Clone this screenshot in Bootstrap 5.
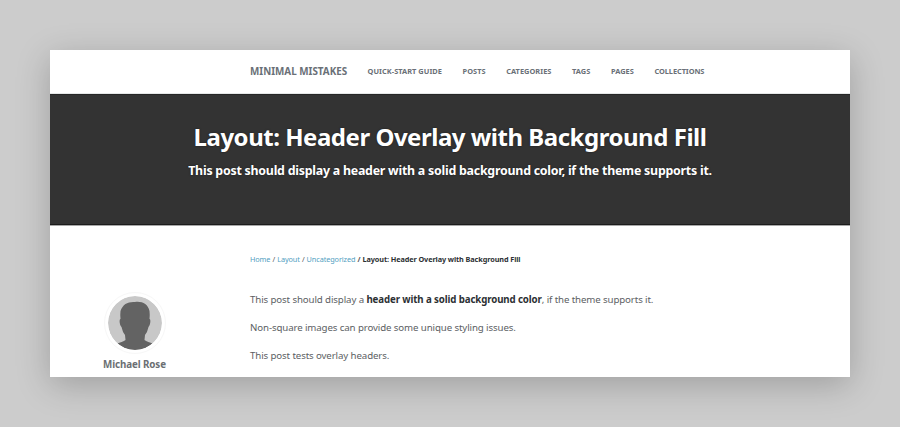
<!DOCTYPE html>
<html lang="en">
<head>
<meta charset="utf-8">
<meta name="viewport" content="width=device-width, initial-scale=1">
<title>Layout: Header Overlay with Background Fill</title>
<link href="https://cdn.jsdelivr.net/npm/bootstrap@5.3.0/dist/css/bootstrap.min.css" rel="stylesheet">
<script src="https://cdn.jsdelivr.net/npm/bootstrap@5.3.0/dist/js/bootstrap.bundle.min.js"></script>
<style>
body{font-family:"Noto Sans",sans-serif;background:#ccc;color:#5c6063;height:427px;padding:50px}
.page{height:327px;box-shadow:0 8px 32px rgba(0,0,0,.22)}
.masthead{height:44px;padding:0 0 1px 200px;gap:20.6px;border-bottom:1px solid #e6e8e8;color:#6a7077}
.masthead .navbar-brand{font-size:9.9px;letter-spacing:0;font-weight:700;color:inherit;width:97px;white-space:nowrap}
.masthead .nav-link{font-size:7.4px;letter-spacing:.04px;font-weight:700;color:inherit;white-space:nowrap;margin-top:2px}
.masthead .nav-last{letter-spacing:-.07px}
.hero{height:131px;background:#333;border-top:1px solid #262626;border-bottom:1px solid #1c1c1c;color:#fff;padding-top:24px;text-shadow:0 0 2px rgba(0,0,0,.5);box-shadow:0 1px #a8a8a8}
.hero h1{font-size:24px;letter-spacing:-.48px;line-height:36px;font-weight:700}
.hero p{font-size:12.4px;letter-spacing:-.24px;line-height:20px;font-weight:700;margin:6px 0 0}
.author{width:200px;padding:67px 31px 0 0;font-size:9.8px;letter-spacing:-.1px;font-weight:700;color:#6b6f73}
.avatar{width:62px;height:62px;padding:3px;border:1px solid #f7f7f7}
.author-name{line-height:16px;margin-top:3px}
.crumbs{--bs-breadcrumb-item-padding-x:2.1px;font-size:7.3px;letter-spacing:-.1px;line-height:12px;padding-top:28px;margin-bottom:27px;color:#444}
.crumbs .breadcrumb-item::before{color:#555}
.crumbs a{color:#52a0bf}
.crumbs .active{color:#2c3033;font-weight:700}
.prose{font-size:9.7px;letter-spacing:-.11px;line-height:16px}
.prose p{margin-bottom:12.2px}
.prose strong{color:#2c3033}
</style>
</head>
<body>
<div class="page bg-white overflow-hidden">
  <nav class="masthead d-flex align-items-center">
    <a class="navbar-brand m-0 p-0" href="#">MINIMAL MISTAKES</a>
    <a class="nav-link p-0" href="#">QUICK-START GUIDE</a>
    <a class="nav-link p-0" href="#">POSTS</a>
    <a class="nav-link p-0" href="#">CATEGORIES</a>
    <a class="nav-link p-0" href="#">TAGS</a>
    <a class="nav-link p-0" href="#">PAGES</a>
    <a class="nav-link nav-last p-0" href="#">COLLECTIONS</a>
  </nav>
  <header class="hero text-center">
    <h1 class="m-0">Layout: Header Overlay with Background Fill</h1>
    <p>This post should display a header with a solid background color, if the theme supports it.</p>
  </header>
  <main class="d-flex">
    <aside class="author d-flex flex-column align-items-center flex-shrink-0">
      <svg class="avatar rounded-circle" viewBox="0 0 54 54" role="img" aria-label="Michael Rose">
        <defs><clipPath id="disc"><circle cx="27" cy="27" r="27"/></clipPath></defs>
        <g clip-path="url(#disc)">
          <rect width="54" height="54" fill="#c8c8c8"/>
          <path fill="#636363" d="M27 6C34 5 40 8 41.500 15Q42 19 41.500 23C43 23 42.500 29 40.500 31Q39.500 36 37 39L36.500 44Q39 46 47 48V54H7V48Q15 46 17.500 44L17 39Q14.500 36 13.500 31C11.500 29 11 23 12.500 23Q12 19 12.500 15C15 8 20 5.500 27 6Z"/>
        </g>
      </svg>
      <div class="author-name">Michael Rose</div>
    </aside>
    <article>
      <ol class="crumbs breadcrumb">
        <li class="breadcrumb-item"><a class="text-decoration-none" href="#">Home</a></li>
        <li class="breadcrumb-item"><a class="text-decoration-none" href="#">Layout</a></li>
        <li class="breadcrumb-item"><a class="text-decoration-none" href="#">Uncategorized</a></li>
        <li class="breadcrumb-item active">Layout: Header Overlay with Background Fill</li>
      </ol>
      <div class="prose">
        <p>This post should display a <strong>header with a solid background color</strong>, if the theme supports it.</p>
        <p>Non-square images can provide some unique styling issues.</p>
        <p>This post tests overlay headers.</p>
      </div>
    </article>
  </main>
</div>
</body>
</html>
